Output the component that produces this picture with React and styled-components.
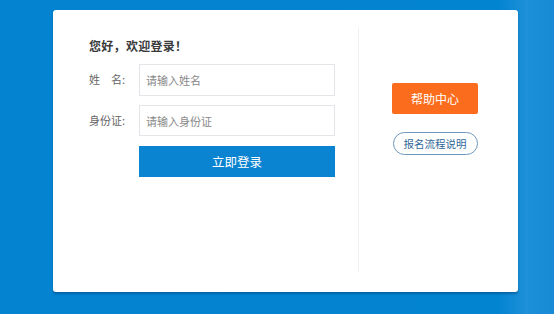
import React from 'react';
import styled, { createGlobalStyle } from 'styled-components';

const Global = createGlobalStyle`
  html, body {
    margin: 0;
    padding: 0;
  }
  body {
    font-family: "Noto Sans CJK SC", "Liberation Sans", sans-serif;
    background: #0384d1;
  }
`;

const Page = styled.div`
  width: 554px;
  height: 314px;
  box-sizing: border-box;
  padding: 10px 36px 22px 53px;
  background: linear-gradient(90deg, #0383d0 0%, #0384d1 90%, #1d90d8 95%, #168bd4 100%);
  overflow: hidden;
`;

const Card = styled.div`
  height: 282px;
  background: #fff;
  border-radius: 3px;
  box-shadow: 0 2px 2px rgba(0, 40, 90, 0.35);
  display: flex;
  padding: 18px 0 20px;
  box-sizing: border-box;
`;

const Left = styled.div`
  width: 306px;
  border-right: 1px solid #eef0f2;
  padding: 9px 0 0 36px;
  box-sizing: border-box;
`;

const Title = styled.h2`
  margin: 0 0 10px;
  font-size: 12px;
  font-weight: bold;
  color: #3a3a3a;
  line-height: 17px;
  letter-spacing: 0.3px;
`;

const Form = styled.div`
  display: grid;
  grid-template-columns: 50px 196px;
  row-gap: 9px;
  align-items: center;
`;

const Label = styled.label`
  font-size: 11px;
  color: #666;
  padding-bottom: 2px;
  white-space: nowrap;
`;

const Input = styled.input`
  height: ${p => p.h}px;
  box-sizing: border-box;
  border: 1px solid #e3e5e8;
  padding: 0 6px;
  font-family: inherit;
  font-size: 11px;
  color: #333;
  outline: none;
  &::placeholder {
    color: #888;
  }
`;

const Submit = styled.button`
  grid-column: 2;
  height: 31px;
  margin-top: 1px;
  border: none;
  background: #0a84d0;
  color: #fff;
  font-family: inherit;
  font-size: 12.5px;
  cursor: pointer;
`;

const Right = styled.div`
  flex: 1;
  display: flex;
  flex-direction: column;
  align-items: center;
  padding: 55px 7px 0 0;
  gap: 18px;
`;

const HelpButton = styled.button`
  width: 86px;
  height: 31px;
  border: none;
  border-radius: 2px;
  background: #fb6d1d;
  color: #fff;
  font-family: inherit;
  font-size: 12px;
  cursor: pointer;
`;

const GuideButton = styled.button`
  width: 85px;
  height: 23px;
  border: 1px solid #6f97bd;
  border-radius: 12px;
  background: #fff;
  color: #2f6898;
  font-family: inherit;
  font-size: 10.5px;
  padding: 0;
  cursor: pointer;
`;

export default function App() {
  return (
    <Page>
      <Global />
      <Card>
        <Left>
          <Title>您好，欢迎登录！</Title>
          <Form>
            <Label>姓　名:</Label>
            <Input h={32} placeholder="请输入姓名" />
            <Label>身份证:</Label>
            <Input h={31} placeholder="请输入身份证" />
            <Submit>立即登录</Submit>
          </Form>
        </Left>
        <Right>
          <HelpButton>帮助中心</HelpButton>
          <GuideButton>报名流程说明</GuideButton>
        </Right>
      </Card>
    </Page>
  );
}
